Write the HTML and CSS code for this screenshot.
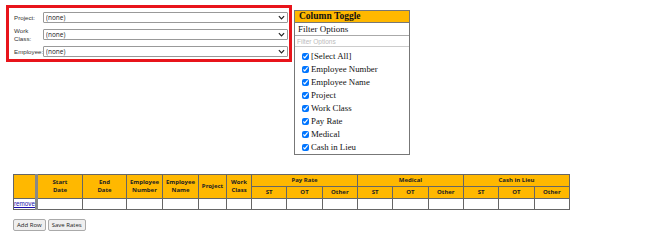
FILE: index.html
```html
<!DOCTYPE html>
<html lang="en">
<head>
    <meta charset="UTF-8">
    <title>Pay Rates</title>
    <link rel="stylesheet" href="styles.css">
</head>
<body>
    <div class="top">
        <div class="filters">
            <label class="lbl" for="project">Project:</label>
            <div class="sel">
                <select id="project"><option>(none)</option></select>
                <svg class="chev" viewBox="0 0 8 5" width="7" height="5"><path d="M1 1l3 3 3-3" fill="none" stroke="#222" stroke-width="1.4"/></svg>
            </div>
            <label class="lbl" for="workClass">Work Class:</label>
            <div class="sel">
                <select id="workClass"><option>(none)</option></select>
                <svg class="chev" viewBox="0 0 8 5" width="7" height="5"><path d="M1 1l3 3 3-3" fill="none" stroke="#222" stroke-width="1.4"/></svg>
            </div>
            <label class="lbl" for="employee">Employee:</label>
            <div class="sel">
                <select id="employee"><option>(none)</option></select>
                <svg class="chev" viewBox="0 0 8 5" width="7" height="5"><path d="M1 1l3 3 3-3" fill="none" stroke="#222" stroke-width="1.4"/></svg>
            </div>
        </div>

        <div class="toggle">
            <div class="toggle-head">Column Toggle</div>
            <div class="toggle-sub">Filter Options</div>
            <input class="toggle-filter" type="text" placeholder="Filter Options">
            <ul class="toggle-list">
                <li><label><input type="checkbox" checked>[Select All]</label></li>
                <li><label><input type="checkbox" checked>Employee Number</label></li>
                <li><label><input type="checkbox" checked>Employee Name</label></li>
                <li><label><input type="checkbox" checked>Project</label></li>
                <li><label><input type="checkbox" checked>Work Class</label></li>
                <li><label><input type="checkbox" checked>Pay Rate</label></li>
                <li><label><input type="checkbox" checked>Medical</label></li>
                <li><label><input type="checkbox" checked>Cash in Lieu</label></li>
            </ul>
        </div>
    </div>

    <table class="rates">
        <colgroup>
            <col style="width:23px"><col style="width:46px"><col style="width:44px">
            <col style="width:36px"><col style="width:36px"><col style="width:28px"><col style="width:25px">
            <col><col><col><col><col><col><col><col><col>
        </colgroup>
        <thead>
            <tr>
                <th rowspan="2"></th>
                <th rowspan="2" class="split">Start<br>Date</th>
                <th rowspan="2">End<br>Date</th>
                <th rowspan="2">Employee<br>Number</th>
                <th rowspan="2">Employee<br>Name</th>
                <th rowspan="2">Project</th>
                <th rowspan="2">Work<br>Class</th>
                <th colspan="3">Pay Rate</th>
                <th colspan="3">Medical</th>
                <th colspan="3">Cash in Lieu</th>
            </tr>
            <tr>
                <th>ST</th><th>OT</th><th>Other</th>
                <th>ST</th><th>OT</th><th>Other</th>
                <th>ST</th><th>OT</th><th>Other</th>
            </tr>
        </thead>
        <tbody>
            <tr>
                <td><a href="#">remove</a></td>
                <td class="split"></td><td></td><td></td><td></td><td></td><td></td>
                <td></td><td></td><td></td><td></td><td></td><td></td><td></td><td></td><td></td>
            </tr>
        </tbody>
    </table>

    <div class="actions">
        <button class="btn">Add Row</button>
        <button class="btn">Save Rates</button>
    </div>
</body>
</html>
```

FILE: styles.css
```css
body {
    margin: 0;
    padding: 5px 6px;
    font-family: 'Open Sans', 'Noto Sans', sans-serif;
    font-size: 7px;
    color: #222;
    background: #fff;
}
.top {
    display: flex;
    align-items: flex-start;
}
.filters {
    width: 274px;
    height: 47px;
    border: 3px solid #e8141b;
    padding: 4px 1px 0 5px;
    display: grid;
    grid-template-columns: 29px 1fr;
    row-gap: 4px;
    align-items: center;
    align-content: start;
}
.lbl {
    font-family: 'Liberation Sans', Arial, sans-serif;
    font-size: 6.2px;
    line-height: 7.5px;
    color: #333;
}
.sel {
    position: relative;
}
.sel select {
    display: block;
    width: 100%;
    height: 11px;
    font-family: inherit;
    font-size: 6.5px;
    padding: 0 2px;
    border: 1px solid #999;
    border-radius: 1px;
    background: #fff;
    color: #222;
    appearance: none;
    -webkit-appearance: none;
}
.chev {
    position: absolute;
    right: 3px;
    top: 3px;
    pointer-events: none;
}
.toggle {
    margin-left: 2px;
    margin-top: 5px;
    width: 114px;
    border: 1px solid #777;
    font-family: 'Liberation Serif', 'DejaVu Serif', serif;
    font-size: 8.8px;
    color: #111;
}
.toggle-head {
    background: #ffb800;
    font-weight: bold;
    font-size: 9.5px;
    height: 11px;
    line-height: 11px;
    padding-left: 4px;
    border-bottom: 1px solid #777;
}
.toggle-sub {
    height: 12px;
    line-height: 13px;
    padding-left: 3px;
    font-size: 9px;
    border-bottom: 1px solid #aaa;
}
.toggle-filter {
    display: block;
    width: 100%;
    box-sizing: border-box;
    height: 11px;
    border: none;
    border-bottom: 1px solid #ccc;
    padding: 0 2px;
    font-family: 'Liberation Sans', sans-serif;
    font-size: 6.5px;
    outline: none;
}
.toggle-filter::placeholder {
    color: #bbb;
}
.toggle-list {
    list-style: none;
    margin: 0;
    padding: 3px 0 0 7px;
}
.toggle-list li {
    height: 13px;
    line-height: 13px;
}
.toggle-list input {
    width: 7px;
    height: 7px;
    margin: 0 2px 0 0;
    vertical-align: -1px;
}
.rates {
    margin: 19px 0 0 7px;
    width: 557px;
    border-collapse: collapse;
    table-layout: fixed;
    border: 1px solid #888;
}
.rates th, .rates td {
    border: 1px solid #666;
    padding: 0;
    text-align: center;
    font-size: 6px;
    line-height: 7.5px;
}
.rates th {
    background: #ffb800;
    font-weight: bold;
    color: #222;
}
.rates thead th {
    height: 11px;
}
.rates td {
    height: 10px;
    background: #fff;
}
.rates td a {
    color: #1a0dab;
    font-family: 'Liberation Sans', Arial, sans-serif;
    font-size: 6.3px;
}
.rates .split {
    border-left: 3px solid #888;
}
.actions {
    margin: 9px 0 0 7px;
    display: flex;
    gap: 2px;
}
.btn {
    font-family: inherit;
    font-size: 6px;
    height: 12px;
    padding: 0 3px;
    border: 1px solid #aaa;
    border-radius: 2px;
    background: #efefef;
    color: #222;
    line-height: 10px;
}
```
